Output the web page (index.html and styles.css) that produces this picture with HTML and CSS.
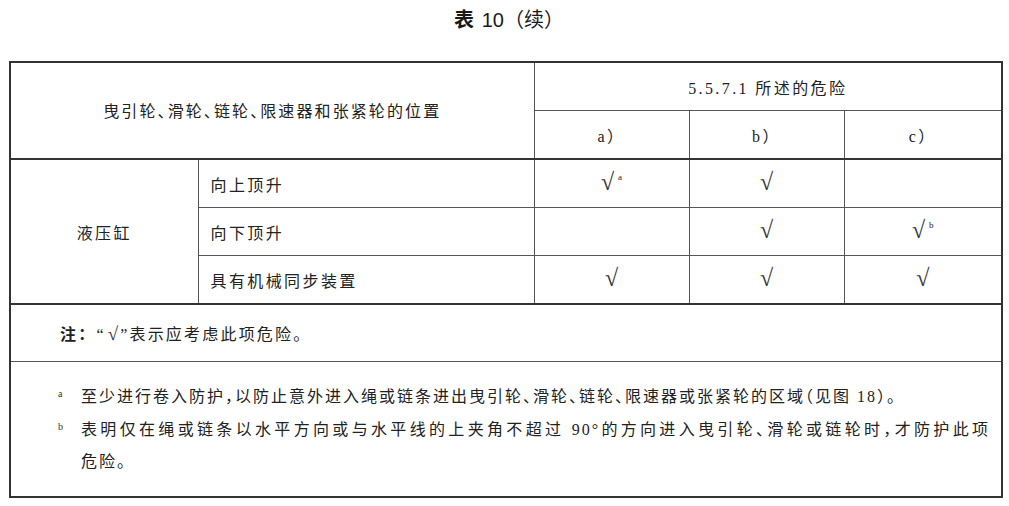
FILE: index.html
```html
<!DOCTYPE html>
<html lang="zh-CN">
<head>
<meta charset="utf-8">
<title>表 10（续）</title>
<link rel="stylesheet" href="styles.css">
</head>
<body>
<main class="page">
  <h1 class="title"><b class="title-key">表</b> 10（续）</h1>
  <table class="hazard">
    <colgroup>
      <col class="c-group">
      <col class="c-mode">
      <col class="c-risk">
      <col class="c-risk">
      <col class="c-risk-last">
    </colgroup>
    <thead>
      <tr class="r-head">
        <th colspan="2" rowspan="2" class="pos">曳引轮、滑轮、链轮、限速器和张紧轮的位置</th>
        <th colspan="3" class="risk-title">5.5.7.1 所述的危险</th>
      </tr>
      <tr class="r-head r-head-sub">
        <th>a）</th>
        <th>b）</th>
        <th>c）</th>
      </tr>
    </thead>
    <tbody>
      <tr class="r-body">
        <td rowspan="3" class="group">液压缸</td>
        <td class="mode">向上顶升</td>
        <td class="mark"><span class="check">√</span><sup class="ref">a</sup></td>
        <td class="mark"><span class="check">√</span></td>
        <td class="mark"></td>
      </tr>
      <tr class="r-body">
        <td class="mode">向下顶升</td>
        <td class="mark"></td>
        <td class="mark"><span class="check">√</span></td>
        <td class="mark"><span class="check">√</span><sup class="ref">b</sup></td>
      </tr>
      <tr class="r-body r-last">
        <td class="mode">具有机械同步装置</td>
        <td class="mark"><span class="check">√</span></td>
        <td class="mark"><span class="check">√</span></td>
        <td class="mark"><span class="check">√</span></td>
      </tr>
    </tbody>
    <tfoot>
      <tr class="r-note">
        <td colspan="5" class="note-cell">
          <p class="note"><b class="note-key">注：</b><span class="quote">“<span class="check">√</span>”</span>表示应考虑此项危险。</p>
        </td>
      </tr>
      <tr class="r-foot">
        <td colspan="5" class="foot-cell">
          <div class="footnotes">
            <p class="fn"><span class="fn-mark">a</span><span class="fn-text">至少进行卷入防护，以防止意外进入绳或链条进出曳引轮、滑轮、链轮、限速器或张紧轮的区域（见图 18）。</span></p>
            <p class="fn"><span class="fn-mark">b</span><span class="fn-text"><span class="fn-fill">表明仅在绳或链条以水平方向或与水平线的上夹角不超过 90°的方向进入曳引轮、滑轮或链轮时，才防护此项</span>危险。</span></p>
          </div>
        </td>
      </tr>
    </tfoot>
  </table>
</main>
</body>
</html>
```

FILE: styles.css
```css
html, body {
  margin: 0;
  padding: 0;
  background: #ffffff;
}

body {
  color: #222222;
  font-family: "Liberation Serif", "Noto Sans CJK SC", serif;
  font-size: 16px;
}

.page {
  padding: 0 8px 0 9px;
}

.title {
  margin: 10px 0 31px;
  height: 20px;
  font-family: "Liberation Sans", "Noto Sans CJK SC", sans-serif;
  font-size: 20px;
  line-height: 20px;
  font-weight: normal;
  text-align: center;
  color: #1a1a1a;
  word-spacing: 2px;
  padding-left: 8px;
}

.title-key {
  font-weight: 700;
}

.hazard {
  width: 992px;
  table-layout: fixed;
  border-collapse: collapse;
  border: 2px solid #333333;
}

.c-group { width: 188px; }
.c-mode { width: 336px; }
.c-risk { width: 155px; }
.c-risk-last { width: 158px; }

.hazard th,
.hazard td {
  border: 1px solid #555555;
  padding: 0;
  font-weight: normal;
  font-size: 16px;
  text-align: center;
  vertical-align: middle;
  letter-spacing: 2.4px;
  color: #222222;
}

.r-head th {
  height: 47px;
}

.hazard .pos {
  font-feature-settings: "halt";
  letter-spacing: 2.1px;
  padding-bottom: 2px;
}

.hazard .pos,
.r-head-sub th {
  border-bottom: 2px solid #333333;
}

.risk-title {
  letter-spacing: 1.6px;
}

.r-body td {
  height: 47px;
}

.hazard .group,
.r-last td {
  border-bottom: 2px solid #333333;
}

.hazard .mode {
  text-align: left;
  padding-left: 12px;
}

.check {
  font-family: "Liberation Serif", serif;
  font-size: 24px;
  line-height: 16px;
  letter-spacing: 0;
  font-weight: normal;
  color: #333333;
}

.ref {
  font-size: 9px;
  letter-spacing: 0;
  margin-left: 4px;
  vertical-align: 10px;
  line-height: 0;
}

.hazard .note-cell {
  height: 56px;
  text-align: left;
  padding-left: 49px;
  letter-spacing: 2.2px;
}

.note {
  margin: 0;
}

.note-key {
  font-weight: 700;
  font-family: "Noto Sans CJK SC", sans-serif;
}

.quote .check {
  margin: 0 2px;
  font-size: 19px;
}

.hazard .foot-cell {
  text-align: left;
  padding: 19px 11px 17px 47px;
  border-top: 1px solid #666666;
  letter-spacing: 2px;
}

.footnotes {
  display: flex;
  flex-direction: column;
}

.fn {
  margin: 0;
  display: grid;
  grid-template-columns: 23px 1fr;
  line-height: 32.5px;
  font-feature-settings: "halt";
}

.fn-mark {
  font-size: 10px;
  line-height: 1;
  letter-spacing: 0;
  padding-top: 8px;
  color: #333333;
}

.fn-fill {
  display: block;
  text-align: justify;
  text-align-last: justify;
}
```
